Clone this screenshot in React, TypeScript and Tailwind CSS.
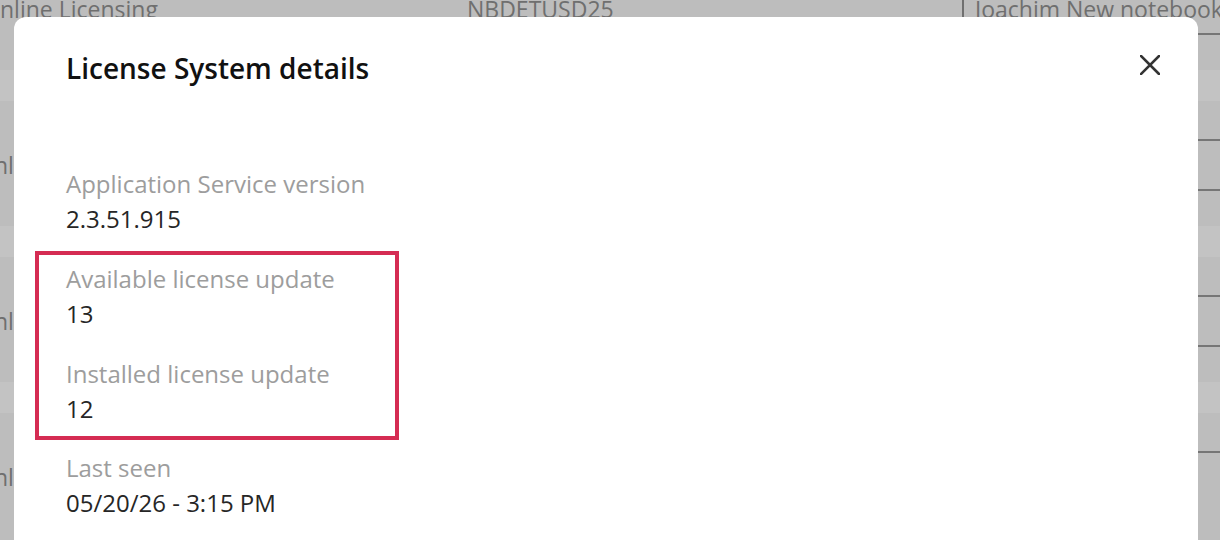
import React from "react";

const BgRow = () => (
  <div className="h-[48px] flex items-center text-[23px] leading-[48px] text-[#6f6f6f] whitespace-nowrap">
    <span className="-ml-[6px]">nline Licensing</span>
  </div>
);

const Period = () => (
  <>
    <div className="h-[2px] ml-[1000px] bg-[#767676]" />
    <div className="h-[35px]" />
    <div className="h-[31px] bg-[#c3c3c3]" />
    <div className="h-[38px]" />
    <div className="h-[2px] ml-[1000px] bg-[#767676]" />
    <BgRow />
  </>
);

const Item = ({ label, value }: { label: string; value: string }) => (
  <div className="flex flex-col">
    <div className="text-[24px] leading-[35px] text-[#9d9d9d]">{label}</div>
    <div className="text-[24px] leading-[35px] text-[#262626]">{value}</div>
  </div>
);

export default function App() {
  return (
    <div
      className="relative w-[1220px] h-[540px] overflow-hidden bg-[#bdbdbd]"
      style={{ fontFamily: '"Open Sans", "Noto Sans", sans-serif' }}
    >
      {/* background table */}
      <div className="flex flex-col">
        <div className="-mt-[15px] h-[48px] flex items-center text-[23px] leading-[48px] text-[#6f6f6f] whitespace-nowrap">
          <span className="w-[467px] shrink-0">nline Licensing</span>
          <span className="w-[495px] shrink-0">NBDETUSD25</span>
          <span className="flex items-center shrink-0">
            <span className="inline-block w-[2px] h-[26px] bg-[#6f6f6f] mr-[11px] mt-[6px]" />
            Joachim New notebook
          </span>
        </div>
        <Period />
        <Period />
        <Period />
      </div>

      {/* modal */}
      <div className="absolute left-[14px] top-[17px] w-[1184px] h-[600px] bg-white rounded-[12px]">
        <button className="absolute left-[1126px] top-[38px] w-[20px] h-[20px] flex items-center justify-center">
          <svg width="20" height="20" viewBox="0 0 20 20" fill="none">
            <path d="M1 1 L19 19 M19 1 L1 19" stroke="#333333" strokeWidth="2.6" strokeLinecap="square" />
          </svg>
        </button>
        <div className="pl-[52px] pt-[33px] flex flex-col">
          <h2 className="text-[28px] leading-[36px] font-semibold text-[#111111]">License System details</h2>
          <div className="mt-[80px]">
            <Item label="Application Service version" value="2.3.51.915" />
          </div>
          <div className="mt-[15px] -ml-[31px] w-[364px] border-[4px] border-[#d52c53] pl-[27px] pt-[6px] pb-[10px] flex flex-col gap-[25px]">
            <Item label="Available license update" value="13" />
            <Item label="Installed license update" value="12" />
          </div>
          <div className="mt-[10px]">
            <Item label="Last seen" value="05/20/26 - 3:15 PM" />
          </div>
        </div>
      </div>
    </div>
  );
}
